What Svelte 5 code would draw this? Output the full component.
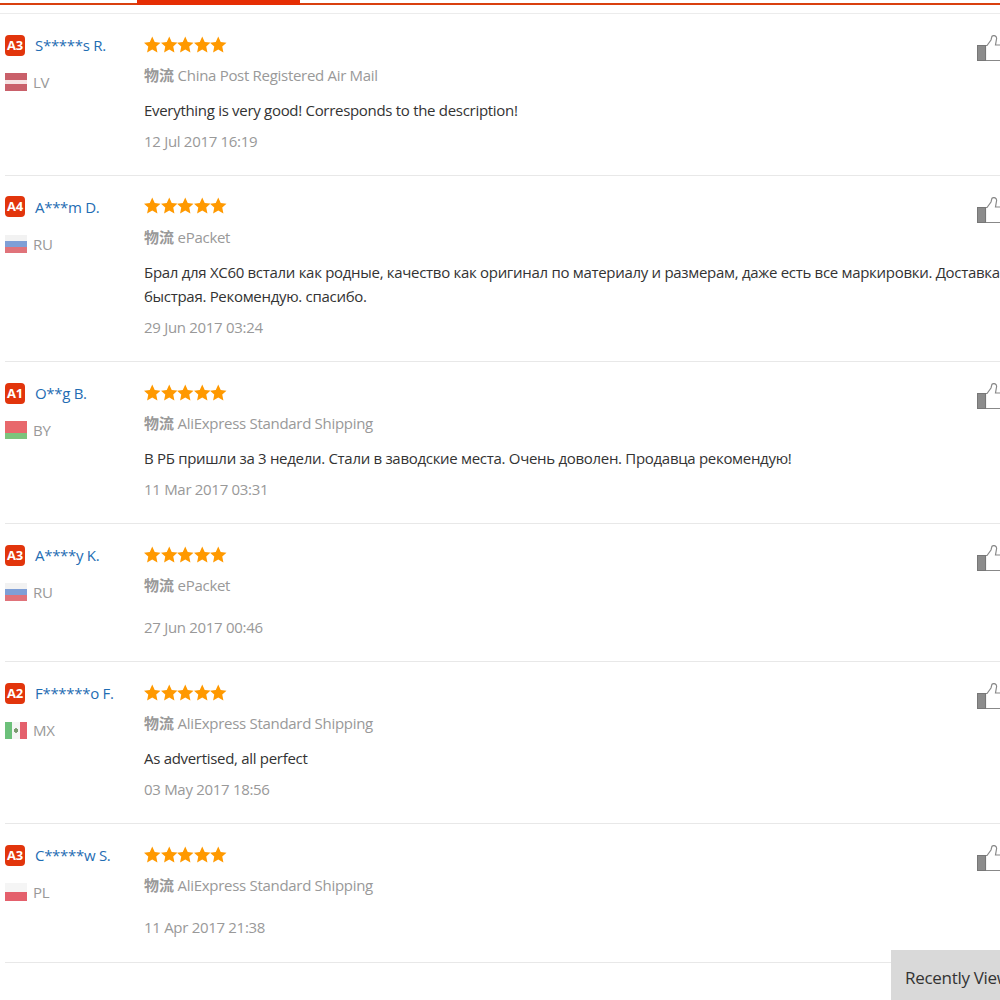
<script lang="ts">
	const reviews = [
		{ level: "A3", name: "S*****s R.", country: "LV", shipping: "China Post Registered Air Mail", text: "Everything is very good! Corresponds to the description!", date: "12 Jul 2017 16:19" },
		{ level: "A4", name: "A***m D.", country: "RU", shipping: "ePacket", text: "Брал для XC60 встали как родные, качество как оригинал по материалу и размерам, даже есть все маркировки. Доставка быстрая. Рекомендую. спасибо.", date: "29 Jun 2017 03:24" },
		{ level: "A1", name: "O**g B.", country: "BY", shipping: "AliExpress Standard Shipping", text: "В РБ пришли за 3 недели. Стали в заводские места. Очень доволен. Продавца рекомендую!", date: "11 Mar 2017 03:31" },
		{ level: "A3", name: "A****y K.", country: "RU", shipping: "ePacket", text: "", date: "27 Jun 2017 00:46" },
		{ level: "A2", name: "F******o F.", country: "MX", shipping: "AliExpress Standard Shipping", text: "As advertised, all perfect", date: "03 May 2017 18:56" },
		{ level: "A3", name: "C*****w S.", country: "PL", shipping: "AliExpress Standard Shipping", text: "", date: "11 Apr 2017 21:38" }
	];

	// stripes per country, top to bottom
	const flags: Record<string, string[]> = {
		LV: ["#c9606a", "#c9606a", "#f6e4e4", "#c9606a", "#c9606a"],
		RU: ["#f2f2f2", "#7f9fd6", "#e0737a"],
		BY: ["#e8686c", "#e8686c", "#7cc47c"],
		PL: ["#f5f5f5", "#e4606c"]
	};
</script>

<div class="page">
	<div class="tabs">
		<div class="tab"></div>
	</div>

	<div class="list">
		{#each reviews as r}
			<div class="review">
				<div class="buyer">
					<div class="who">
						<span class="badge">{r.level}</span>
						<a class="name" href="#top">{r.name}</a>
					</div>
					<div class="from">
						{#if r.country === "MX"}
							<span class="flag mx">
								<i class="mx-g"></i><i class="mx-w"></i><i class="mx-r"></i>
							</span>
						{:else}
							<span class="flag">
								{#each flags[r.country] as c}
									<i style="background:{c}"></i>
								{/each}
							</span>
						{/if}
						<span>{r.country}</span>
					</div>
				</div>

				<div class="body">
					<div class="stars">
						{#each [0, 1, 2, 3, 4] as s (s)}
							<svg width="16.5" height="17" viewBox="0 0 24 24"><polygon fill="#f90" points="12,0.5 15.6,8.2 24,9.3 17.8,15 19.5,23.5 12,19.2 4.5,23.5 6.2,15 0,9.3 8.4,8.2" /></svg>
						{/each}
					</div>
					<div class="ship"><b>物流</b> {r.shipping}</div>
					<p class="comment">{r.text}</p>
					<div class="date">{r.date}</div>
				</div>

				<svg class="thumb" width="24" height="27" viewBox="0 0 24 27">
					<path d="M8.5 10.5 H10 L14 5 L15 1.2 C17 -0.2 19.8 1 19.6 3.5 L18.5 10 H30 V25.5 H8.5 Z" fill="#fff" stroke="#888" stroke-width="1.2" />
					<rect x="0.5" y="10.5" width="8" height="15" fill="#8c8c8c" stroke="#777" />
				</svg>
			</div>
		{/each}
	</div>

	<div class="recent">Recently Viewed</div>
</div>

<style>
	:global(body) {
		background: #fff;
		font-family: "Open Sans", "Noto Sans CJK SC", sans-serif;
	}
	.page {
		position: relative;
		width: 1000px;
		height: 1000px;
		overflow: hidden;
	}
	.tabs {
		height: 5px;
		box-sizing: border-box;
		padding-left: 137px;
		border-bottom: 2px solid #d9400f;
	}
	.tab {
		width: 163px;
		height: 5px;
		background: #e62e04;
	}
	.list {
		margin-top: 8px;
		border-top: 1px solid #ececec;
	}
	.review {
		display: flex;
		margin-left: 5px;
		padding: 20px 0 23.35px;
		border-bottom: 1px solid #e8e8e8;
		position: relative;
	}
	.buyer {
		width: 139px;
		flex: none;
	}
	.who {
		display: flex;
		align-items: center;
		gap: 10px;
		height: 22px;
	}
	.badge {
		width: 20px;
		height: 21px;
		border-radius: 4px;
		background: #e2350c;
		color: #fff;
		font-size: 13px;
		font-weight: 700;
		letter-spacing: -0.3px;
		text-align: center;
		line-height: 21px;
	}
	.name {
		color: #1f6db3;
		font-size: 15px;
		letter-spacing: -0.3px;
		text-decoration: none;
	}
	.from {
		display: flex;
		align-items: center;
		gap: 6px;
		margin-top: 15px;
		color: #999;
		font-size: 15px;
		letter-spacing: -0.3px;
		height: 22px;
	}
	.flag {
		width: 22px;
		height: 18px;
		display: flex;
		flex-direction: column;
	}
	.flag i {
		flex: 1;
	}
	.flag.mx {
		flex-direction: row;
		height: 17px;
		background: #f5f5f5;
	}
	.mx-g {
		background: #6cc07a;
	}
	.mx-r {
		background: #e4606c;
	}
	.mx-w {
		background: radial-gradient(circle, #7a9a70 0 2px, #f5f5f5 2.5px);
	}
	.body {
		width: 860px;
		flex: none;
	}
	.stars {
		display: flex;
		height: 20px;
		align-items: center;
	}
	.ship {
		margin-top: 10px;
		color: #999;
		font-size: 15px;
		letter-spacing: -0.3px;
		line-height: 22px;
	}
	.ship b {
		font-family: "Noto Sans CJK SC", sans-serif;
		font-weight: 700;
		letter-spacing: 0;
	}
	.comment {
		margin: 12px 0 0;
		min-height: 1px;
		color: #333;
		font-size: 15px;
		letter-spacing: -0.3px;
		line-height: 24.5px;
	}
	.date {
		margin-top: 7px;
		color: #999;
		font-size: 15px;
		letter-spacing: -0.3px;
		line-height: 22px;
	}
	.thumb {
		position: absolute;
		left: 972px;
		top: 21px;
	}
	.recent {
		position: absolute;
		left: 891px;
		top: 950px;
		width: 130px;
		height: 50px;
		box-sizing: border-box;
		padding: 16px 0 0 14px;
		background: #d9d9d9;
		color: #333;
		font-size: 17px;
		letter-spacing: -0.3px;
		line-height: 24px;
		white-space: nowrap;
		overflow: hidden;
	}
</style>
